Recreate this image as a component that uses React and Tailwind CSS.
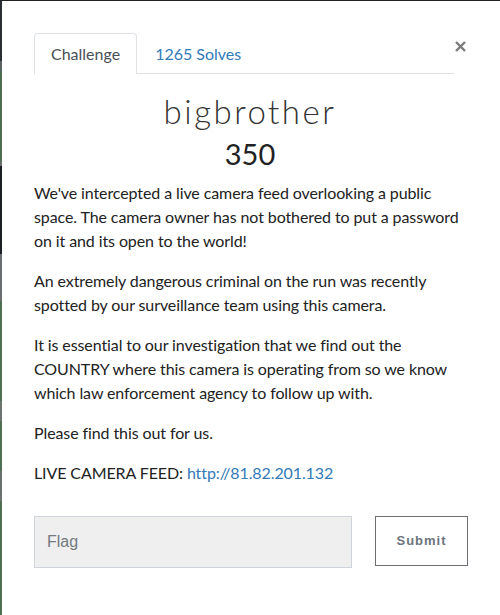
import React from 'react';

const stripSegments = [
  ['h-[60px]', 'bg-[#2b2f33]'],
  ['h-[10px]', 'bg-[#5b6360]'],
  ['h-[90px]', 'bg-[#4d6e52]'],
  ['h-[5px]', 'bg-[#6a6f6c]'],
  ['h-[88px]', 'bg-[#1c2024]'],
  ['h-[47px]', 'bg-[#6b6e70]'],
  ['h-[100px]', 'bg-[#4f7055]'],
  ['h-[20px]', 'bg-[#6d7470]'],
  ['h-[50px]', 'bg-[#4f7055]'],
  ['h-[30px]', 'bg-[#6b716d]'],
  ['h-[115px]', 'bg-[#4e6f54]'],
];

const paragraphs = [
  "We've intercepted a live camera feed overlooking a public space. The camera owner has not bothered to put a password on it and its open to the world!",
  'An extremely dangerous criminal on the run was recently spotted by our surveillance team using this camera.',
  'It is essential to our investigation that we find out the COUNTRY where this camera is operating from so we know which law enforcement agency to follow up with.',
  'Please find this out for us.',
];

const App = () => {
  return (
    <div className="w-[500px] h-[615px] flex flex-col overflow-hidden bg-white">
      <div className="h-[1px] bg-[#1f2326] shrink-0" />
      <div className="flex flex-1">
        <div className="w-[2px] flex flex-col shrink-0">
          {stripSegments.map(([h, bg], i) => (
            <div key={i} className={`${h} ${bg}`} />
          ))}
        </div>

        <div className="flex-1 bg-white pl-[32px] pt-[32px] font-['Lato',sans-serif] text-[#212529]">
          <div className="flex items-start">
            <div className="w-[420px] flex border-b border-[#dee2e6] text-[16px] leading-[22px]">
              <div className="px-4 pt-[9px] pb-[9px] border border-b-0 border-[#dee2e6] rounded-t-[4px] bg-white text-[#495057] -mb-[1px]">
                Challenge
              </div>
              <div className="pl-[18px] pt-[10px] text-[#337ab7]">1265 Solves</div>
            </div>
            <button className="ml-[1px] mt-[8px] w-[11px] h-[11px]">
              <svg width="11" height="11" viewBox="0 0 11 11">
                <path d="M1 1 L10 10 M10 1 L1 10" stroke="#7b7b7b" strokeWidth="2.4" strokeLinecap="butt" />
              </svg>
            </button>
          </div>

          <div className="w-[432px] text-center mt-[18px]">
            <h2 className="text-[33px] leading-[38px] font-light tracking-[2.5px] text-[#333]">bigbrother</h2>
            <h3 className="text-[29px] leading-[35px] mt-[6px] text-[#222]">350</h3>
          </div>

          <div className="w-[430px] mt-[10px] text-[16px] leading-[24px] tracking-[-0.1px] text-[#222]">
            {paragraphs.map((p, i) => (
              <p key={i} className="mb-4">{p}</p>
            ))}
            <p className="mb-4">
              LIVE CAMERA FEED:{' '}
              <a href="#" className="text-[#337ab7]">http://81.82.201.132</a>
            </p>
          </div>

          <div className="flex items-start mt-[31px]">
            <div className="w-[318px] h-[52px] bg-[#efefef] border border-[#ced4da] flex items-center pl-[12px]">
              <input
                placeholder="Flag"
                className="w-full bg-transparent text-[16px] font-['Liberation_Sans',sans-serif] text-[#495057] placeholder:text-[#737a80] outline-none"
              />
            </div>
            <button className="ml-[23px] w-[93px] h-[50px] border border-[#6c7075] bg-white text-[#6c757d] text-[13px] font-bold tracking-[1px] font-['Liberation_Sans',sans-serif]">
              Submit
            </button>
          </div>
        </div>
      </div>
    </div>
  );
};

export default App;
